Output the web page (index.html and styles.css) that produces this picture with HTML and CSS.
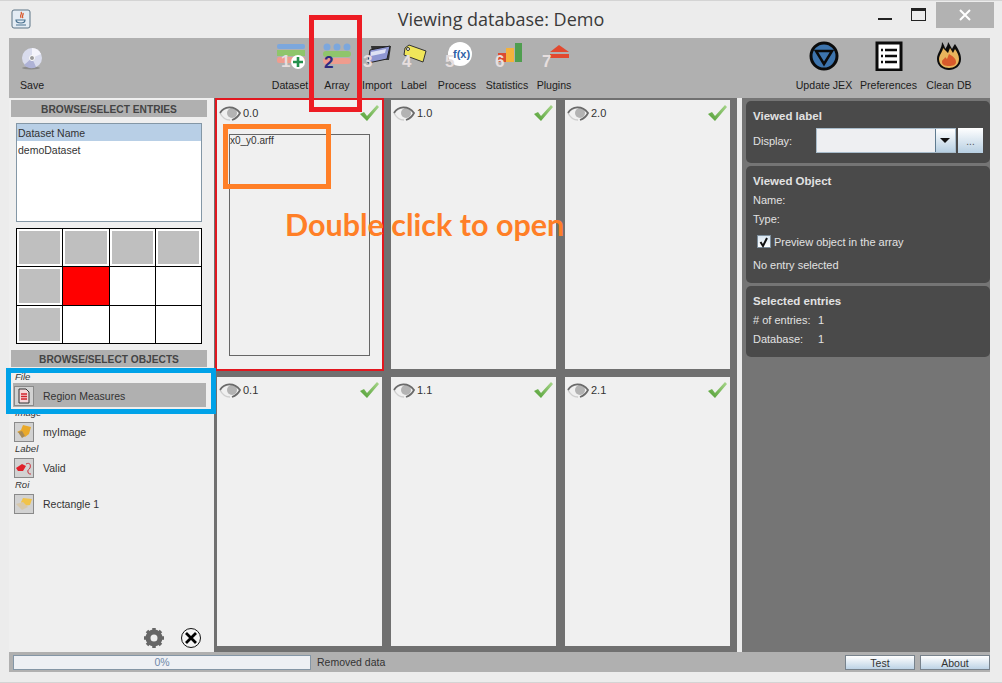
FILE: index.html
```html
<!DOCTYPE html>
<html>
<head>
<meta charset="UTF-8">
<title>Viewing database: Demo</title>
<link rel="stylesheet" href="styles.css">
</head>
<body>
<div class="window">

	<!-- title bar -->
	<div class="titlebar">
		<svg class="app-icon" width="20" height="20" viewBox="0 0 20 20">
			<rect x="1" y="1" width="18" height="18" rx="2" fill="#e4ecf4" stroke="#5d7486"/>
			<path d="M10 3c2 2-2 3 0 6M12 4c1 2-2 3 0 5" stroke="#d8562a" stroke-width="1.3" fill="none"/>
			<path d="M5 11h9c0 3-2 3-4 3s-5 0-5-3zM5 16h10" stroke="#4a7290" stroke-width="1.2" fill="none"/>
		</svg>
		<div class="title">Viewing database: Demo</div>
		<div class="win-controls">
			<div class="win-min"></div>
			<div class="win-max"></div>
			<div class="win-close">
				<svg width="12" height="12" viewBox="0 0 12 12"><path d="M1 1l10 10M11 1L1 11" stroke="#fff" stroke-width="2"/></svg>
			</div>
		</div>
	</div>

	<div class="content">
		<!-- toolbar -->
		<div class="toolbar">
			<div class="tool tool-save">
				<svg width="26" height="30" viewBox="0 0 26 30">
					<ellipse cx="11" cy="27" rx="9" ry="1.500" fill="#8b8b8b"/>
					<circle cx="12" cy="17" r="10" fill="#d9dced"/>
					<path d="M12 7a10 10 0 0 1 9 6l-9 4z" fill="#f4f4fb"/>
					<path d="M4 24a10 10 0 0 0 12 2l-4-9z" fill="#aeb2d6"/>
					<circle cx="12" cy="17" r="2.500" fill="#9a9a9a" stroke="#fff"/>
				</svg>
				<span>Save</span>
			</div>

			<div class="tool-group">
				<div class="tool tool-dataset">
					<svg width="36" height="30" viewBox="0 0 36 30">
						<rect x="5" y="3" width="28" height="5" rx="2" fill="#7ca7dd"/>
						<rect x="5" y="9" width="28" height="6" fill="#8fc56b"/>
						<rect x="5" y="16" width="28" height="6" rx="2" fill="#ef9c8e"/>
						<text x="9" y="26" class="step">1</text>
						<circle cx="26" cy="21" r="7" fill="#fff"/>
						<path d="M26 16v10M21 21h10" stroke="#23904c" stroke-width="2.600"/>
					</svg>
					<span>Dataset</span>
				</div>
				<div class="tool tool-array">
					<svg width="32" height="30" viewBox="0 0 32 30">
						<g fill="#7ca7dd"><circle cx="6" cy="6" r="3.500"/><circle cx="16" cy="6" r="3.500"/><circle cx="26" cy="6" r="3.500"/></g>
						<rect x="2" y="10" width="28" height="6" rx="3" fill="#8fc56b"/>
						<rect x="2" y="17" width="28" height="6" rx="3" fill="#ef9c8e"/>
						<text x="3" y="27" class="step step-dark">2</text>
					</svg>
					<span>Array</span>
				</div>
				<div class="tool tool-import">
					<svg width="32" height="30" viewBox="0 0 32 30">
						<path d="M10 5h20l-2 14H12z" fill="#333"/>
						<path d="M9 9l20-4-3 13-19 4z" fill="#8f97d2" stroke="#222"/>
						<path d="M10 11l15-3-1 4-14 3z" fill="#dfe2f4"/>
						<text x="2" y="26" class="step">3</text>
					</svg>
					<span>Import</span>
				</div>
				<div class="tool tool-label">
					<svg width="32" height="30" viewBox="0 0 32 30">
						<path d="M7 7l4-3 17 6-3 11L6 14z" fill="#f0e55a" stroke="#333"/>
						<circle cx="10" cy="8" r="1.500" fill="#fff" stroke="#333"/>
						<text x="4" y="26" class="step">4</text>
					</svg>
					<span>Label</span>
				</div>
				<div class="tool tool-process">
					<svg width="36" height="30" viewBox="0 0 36 30">
						<circle cx="21" cy="13" r="12" fill="#fff"/>
						<text x="14" y="17" class="fx">f(x)</text>
						<text x="6" y="26" class="step">5</text>
					</svg>
					<span>Process</span>
				</div>
				<div class="tool tool-stats">
					<svg width="36" height="30" viewBox="0 0 36 30">
						<path d="M9 12h8v9H9z" fill="#dc4b32"/>
						<rect x="17" y="7" width="8" height="14" fill="#f5b23c"/>
						<rect x="26" y="2" width="7" height="19" fill="#4f9e4f"/>
						<text x="6" y="26" class="step">6</text>
					</svg>
					<span>Statistics</span>
				</div>
				<div class="tool tool-plugins">
					<svg width="36" height="30" viewBox="0 0 36 30">
						<path d="M14 11L23 4l10 7z" fill="#e2492f"/>
						<rect x="14" y="13" width="19" height="4" fill="#e2492f"/>
						<text x="6" y="26" class="step">7</text>
					</svg>
					<span>Plugins</span>
				</div>
			</div>

			<div class="tool-group tool-group-right">
				<div class="tool tool-update">
					<svg width="30" height="30" viewBox="0 0 30 30">
						<circle cx="15" cy="15" r="13" fill="#3d74ad" stroke="#0b0b0b" stroke-width="3"/>
						<path d="M7 10h16l-8 13z" fill="#3d74ad" stroke="#0b0b0b" stroke-width="2.500"/>
					</svg>
					<span>Update JEX</span>
				</div>
				<div class="tool tool-prefs">
					<svg width="30" height="30" viewBox="0 0 30 30">
						<rect x="3" y="2" width="24" height="27" fill="#fff" stroke="#0b0b0b" stroke-width="3"/>
						<path d="M11 9h12M11 15h12M11 21h12M7 9h2M7 15h2M7 21h2" stroke="#0b0b0b" stroke-width="2.500"/>
					</svg>
					<span>Preferences</span>
				</div>
				<div class="tool tool-clean">
					<svg width="30" height="30" viewBox="0 0 30 30">
						<path d="M8 1c2 3 3 5 3 7 2-2 3-5 3-7 2 3 3 5 4 7 1-2 2-4 3-5 3 5 6 9 6 15 0 7-6 11-12 11S3 25 3 18C3 12 8 8 8 1z" fill="#0d0d0d"/>
						<path d="M9 7c0 3-4 7-4 11 0 6 5 9 10 9s10-3 10-9c0-4-2-7-4-10l-2 4-3-5-2 5z" fill="#e8b45c"/>
						<path d="M15 13c3 2 7 4 7 8 0 3-3 4-7 4s-7-1-7-4c0-3 3-3 3-5l2 2z" fill="#d85a2c"/>
					</svg>
					<span>Clean DB</span>
				</div>
			</div>
		</div>

		<div class="main">
			<!-- left column -->
			<div class="left">
				<div class="section-head">BROWSE/SELECT ENTRIES</div>
				<div class="entry-list">
					<div class="entry selected">Dataset Name</div>
					<div class="entry">demoDataset</div>
				</div>
				<div class="plate">
					<div class="well on"></div><div class="well on"></div><div class="well on"></div><div class="well on"></div>
					<div class="well on"></div><div class="well red"></div><div class="well"></div><div class="well"></div>
					<div class="well on"></div><div class="well"></div><div class="well"></div><div class="well"></div>
				</div>
				<div class="section-head">BROWSE/SELECT OBJECTS</div>
				<div class="objects">
					<div class="obj-type">File</div>
					<div class="obj selected">
						<div class="obj-icon">
							<svg width="14" height="16" viewBox="0 0 14 16"><path d="M2 1h7l3 3v11H2z" fill="#f4d7da" stroke="#333"/><path d="M4 6h6M4 8.500h6M4 11h6" stroke="#d2222c" stroke-width="1.300"/></svg>
						</div>
						<span>Region Measures</span>
					</div>
					<div class="obj-type">Image</div>
					<div class="obj">
						<div class="obj-icon">
							<svg width="18" height="18" viewBox="0 0 18 18"><path d="M8 2l8 2-2 7-4 3-3-3-5-2 4-2z" fill="#e9a92a"/><path d="M3 9l4-1 3 5-3 2z" fill="#a88a55"/></svg>
						</div>
						<span>myImage</span>
					</div>
					<div class="obj-type">Label</div>
					<div class="obj">
						<div class="obj-icon">
							<svg width="18" height="18" viewBox="0 0 18 18"><path d="M1 9l6-4 4 2-3 5-5 0z" fill="#e0202a"/><path d="M11 5c4-2 5 1 4 4-1 2-3 2-2 4 0 2 2 2 3 2" stroke="#c8303a" fill="none"/></svg>
						</div>
						<span>Valid</span>
					</div>
					<div class="obj-type">Roi</div>
					<div class="obj">
						<div class="obj-icon">
							<svg width="18" height="18" viewBox="0 0 18 18"><path d="M8 3l9 1-2 6-7 1-2-4z" fill="#f1c34a"/><path d="M1 9l7-2 5 5-6 3z" fill="#d8c8aa"/></svg>
						</div>
						<span>Rectangle 1</span>
					</div>
				</div>
				<div class="left-tools">
					<svg width="22" height="22" viewBox="0 0 22 22">
						<circle cx="11" cy="11" r="6" fill="none" stroke="#666" stroke-width="5"/>
						<path d="M11 1v4M11 17v4M1 11h4M17 11h4M4 4l3 3M15 15l3 3M18 4l-3 3M7 15l-3 3" stroke="#666" stroke-width="3.500"/>
					</svg>
					<svg width="22" height="22" viewBox="0 0 22 22">
						<circle cx="11" cy="11" r="9.500" fill="#f4f4f4" stroke="#111"/>
						<path d="M6 6l10 10M16 6L6 16" stroke="#000" stroke-width="2.800"/>
					</svg>
				</div>
			</div>

			<!-- array of entries -->
			<div class="array">
				<div class="cell active">
					<div class="cell-head">
						<svg class="eye" width="22" height="16" viewBox="0 0 22 16"><use href="#eye-shape"/></svg>
						<span>0.0</span>
						<svg class="check" width="20" height="16" viewBox="0 0 20 16"><use href="#check-shape"/></svg>
					</div>
					<div class="preview">x0_y0.arff</div>
				</div>
				<div class="cell">
					<div class="cell-head">
						<svg class="eye" width="22" height="16" viewBox="0 0 22 16"><use href="#eye-shape"/></svg>
						<span>1.0</span>
						<svg class="check" width="20" height="16" viewBox="0 0 20 16"><use href="#check-shape"/></svg>
					</div>
				</div>
				<div class="cell">
					<div class="cell-head">
						<svg class="eye" width="22" height="16" viewBox="0 0 22 16"><use href="#eye-shape"/></svg>
						<span>2.0</span>
						<svg class="check" width="20" height="16" viewBox="0 0 20 16"><use href="#check-shape"/></svg>
					</div>
				</div>
				<div class="cell">
					<div class="cell-head">
						<svg class="eye" width="22" height="16" viewBox="0 0 22 16"><use href="#eye-shape"/></svg>
						<span>0.1</span>
						<svg class="check" width="20" height="16" viewBox="0 0 20 16"><use href="#check-shape"/></svg>
					</div>
				</div>
				<div class="cell">
					<div class="cell-head">
						<svg class="eye" width="22" height="16" viewBox="0 0 22 16"><use href="#eye-shape"/></svg>
						<span>1.1</span>
						<svg class="check" width="20" height="16" viewBox="0 0 20 16"><use href="#check-shape"/></svg>
					</div>
				</div>
				<div class="cell">
					<div class="cell-head">
						<svg class="eye" width="22" height="16" viewBox="0 0 22 16"><use href="#eye-shape"/></svg>
						<span>2.1</span>
						<svg class="check" width="20" height="16" viewBox="0 0 20 16"><use href="#check-shape"/></svg>
					</div>
				</div>
			</div>

			<div class="stripe"></div>

			<!-- right column -->
			<div class="right">
				<div class="panel panel-label">
					<div class="panel-title">Viewed label</div>
					<div class="display-row">
						<span class="display-name">Display:</span>
						<div class="combo"><div class="combo-arrow"></div></div>
						<div class="dots">...</div>
					</div>
				</div>
				<div class="panel panel-object">
					<div class="panel-title">Viewed Object</div>
					<div class="panel-line">Name:</div>
					<div class="panel-line">Type:</div>
					<div class="check-row">
						<div class="checkbox">
							<svg width="12" height="12" viewBox="0 0 12 12"><path d="M2.500 6l2.500 4 4-8" stroke="#111" stroke-width="2" fill="none"/></svg>
						</div>
						<span>Preview object in the array</span>
					</div>
					<div class="panel-line">No entry selected</div>
				</div>
				<div class="panel panel-selected">
					<div class="panel-title">Selected entries</div>
					<div class="panel-line count"><span># of entries:</span><span>1</span></div>
					<div class="panel-line count"><span>Database:</span><span>1</span></div>
				</div>
			</div>
		</div>

		<!-- status bar -->
		<div class="statusbar">
			<div class="progress">0%</div>
			<div class="status-text">Removed data</div>
			<div class="btn btn-test">Test</div>
			<div class="btn">About</div>
		</div>
	</div>

	<div class="note-box note-red"></div>
	<div class="note-box note-orange"></div>
	<div class="note-box note-blue"></div>
	<div class="note-text">Double click to open</div>
</div>

<svg width="0" height="0" class="defs">
	<defs>
		<linearGradient id="check-fill" x1="0" y1="1" x2="1" y2="0">
			<stop offset="0" stop-color="#4f9e32"/>
			<stop offset="1" stop-color="#a9d68c"/>
		</linearGradient>
		<g id="eye-shape">
			<path d="M1 8C3 12 7 15 11 15" stroke="#cfcfcf" stroke-width="1.500" fill="none"/>
			<circle cx="13" cy="8" r="5" fill="#b3b3b3"/>
			<path d="M1 8C5 1 15 0 21 8C19 12 16 14 13 15" stroke="#6a6a6a" stroke-width="1.800" fill="none"/>
		</g>
		<g id="check-shape">
			<path d="M1 9l4-2 3 4L18 0l2 2L8 16z" fill="url(#check-fill)"/>
		</g>
	</defs>
</svg>
</body>
</html>
```

FILE: styles.css
```css
* {
	padding: 0;
	margin: 0;
	box-sizing: border-box;
}

body {
	font-family: "Liberation Sans", Arial, sans-serif;
	font-size: 11px;
	background-color: #ececec;
	overflow: hidden;
}

.window {
	position: relative;
	width: 1002px;
	height: 683px;
	background-color: #ececec;
	border-top: 1px solid #d4d4d4;
	border-bottom: 1px solid #d4d4d4;
	overflow: hidden;
}

.defs {
	position: absolute;
}

/* title bar */
.titlebar {
	height: 37px;
	display: flex;
	align-items: flex-start;
	padding-left: 11px;
	position: relative;
}

.app-icon {
	margin-top: 8px;
}

.title {
	flex: 1;
	text-align: center;
	font-family: "Open Sans", sans-serif;
	font-size: 18px;
	line-height: 36px;
	color: #3a3a3a;
	padding-left: 93px;
}

.win-controls {
	display: flex;
	align-items: flex-start;
	width: 124px;
}

.win-min {
	width: 14px;
	height: 2px;
	background-color: #222;
	margin-top: 17px;
}

.win-max {
	width: 15px;
	height: 13px;
	border: 1px solid #222;
	border-top-width: 3px;
	margin: 7px 0 0 19px;
}

.win-close {
	width: 58px;
	height: 26px;
	margin: 1px 0 0 10px;
	background-color: #b2b2b2;
	display: flex;
	align-items: center;
	justify-content: center;
}

.content {
	margin: 0 12px 0 9px;
	display: flex;
	flex-direction: column;
}

/* toolbar */
.toolbar {
	height: 60px;
	background-color: #b0b0b0;
	display: flex;
	padding-left: 11px;
}

.tool {
	display: flex;
	flex-direction: column;
	align-items: center;
	padding-top: 3px;
	color: #1c1c1c;
	font-size: 10.600px;
}

.tool svg {
	display: block;
	height: 30px;
	margin-bottom: 7px;
}

.tool span {
	line-height: 14px;
	white-space: nowrap;
}

.tool-save {
	align-items: flex-start;
}

.tool-group {
	display: flex;
	margin-left: 218px;
}

.tool-dataset { width: 52px; }
.tool-array { width: 42px; }
.tool-import { width: 38px; }
.tool-label { width: 36px; }
.tool-process { width: 50px; }
.tool-stats { width: 50px; }
.tool-plugins { width: 44px; }
.tool-update { width: 64px; }
.tool-prefs { width: 65px; }
.tool-clean { width: 56px; }

.tool-group-right {
	margin-left: auto;
	padding-right: 13px;
}

.step {
	font-family: "Liberation Sans", sans-serif;
	font-size: 17px;
	font-weight: bold;
	fill: #e6dede;
}

.step-dark {
	fill: #2d2a80;
}

.fx {
	font-family: "Liberation Sans", sans-serif;
	font-size: 11px;
	font-weight: bold;
	fill: #2f62a8;
}

/* main row */
.main {
	height: 554px;
	display: flex;
}

.left {
	width: 205px;
	background-color: #efefef;
	padding: 2px 7px 0 2px;
	display: flex;
	flex-direction: column;
	position: relative;
	font-size: 10.500px;
}

.section-head {
	height: 17px;
	padding-top: 2px;
	background-color: #b0b0b0;
	color: #444;
	font-size: 10.200px;
	font-weight: bold;
	line-height: 15px;
	text-align: center;
}

.entry-list {
	height: 99px;
	margin: 6px 5px 0 5px;
	background-color: #fff;
	border: 1px solid #8497a6;
}

.entry {
	height: 17px;
	line-height: 18px;
	padding-left: 1px;
	color: #333;
}

.entry.selected {
	background-color: #b8cfe6;
}

.plate {
	height: 116px;
	margin: 6px 5px 6px 5px;
	display: grid;
	grid-template-columns: repeat(4, 1fr);
	grid-template-rows: repeat(3, 1fr);
	border: 1px solid #000;
	background-color: #000;
	gap: 1px;
}

.well {
	background-color: #fff;
}

.well.on {
	background-color: #bfbfbf;
	border: 2px solid #fff;
}

.well.red {
	background-color: #f00;
}

.objects {
	padding: 4px 1px 0 2px;
}

.obj-type {
	height: 12px;
	line-height: 12px;
	font-size: 9.500px;
	font-style: italic;
	color: #333;
	padding-left: 2px;
}

.obj {
	height: 24px;
	display: flex;
	align-items: center;
	gap: 9px;
	color: #333;
	line-height: 14px;
	padding-top: 1px;
}

.obj.selected {
	background-color: #b0b0b0;
}

.obj-icon {
	width: 20px;
	height: 20px;
	margin-left: 1px;
	background-color: #d2d2d2;
	border: 1px solid #8a8a8a;
	display: flex;
	align-items: center;
	justify-content: center;
}

.left-tools {
	margin-top: auto;
	padding: 0 5px 3px 0;
	display: flex;
	justify-content: flex-end;
	gap: 15px;
}

/* array */
.array {
	width: 523px;
	background-color: #707070;
	padding: 2px 7px 0 3px;
	display: grid;
	grid-template-columns: repeat(3, 165px);
	grid-template-rows: 269px 269px;
	column-gap: 9px;
	row-gap: 8px;
}

.cell {
	background-color: #f0f0f0;
	padding: 5px 3px 0 2px;
	color: #333;
}

.cell.active {
	outline: 2px solid #e2171f;
	padding-bottom: 13px;
	display: flex;
	flex-direction: column;
}

.cell-head {
	display: flex;
	align-items: center;
	gap: 2px;
}

.check {
	margin-left: auto;
}

.preview {
	flex: 1;
	margin: 13px 9px 0 10px;
	border: 1px solid #666;
	font-size: 10px;
	line-height: 12px;
}

.stripe {
	width: 5px;
	background-color: #ececec;
}

/* right column */
.right {
	width: 248px;
	background-color: #757575;
	padding: 3px 0 0 4px;
	display: flex;
	flex-direction: column;
	gap: 3px;
}

.panel {
	background-color: #4a4a4a;
	border-radius: 5px;
	color: #e2e2e2;
	padding: 8px 7px 0 7px;
}

.panel-label {
	height: 62px;
}

.panel-object {
	height: 117px;
}

.panel-selected {
	height: 71px;
}

.panel-title {
	font-size: 11.500px;
	font-weight: bold;
	line-height: 14px;
	margin-bottom: 5px;
}

.panel-line {
	line-height: 14px;
	margin-bottom: 5px;
}

.display-row {
	display: flex;
	align-items: center;
}

.display-name {
	width: 63px;
}

.combo {
	width: 140px;
	height: 25px;
	background-color: #eeeff2;
	border: 1px solid #a8bccb;
	display: flex;
	justify-content: flex-end;
}

.combo-arrow {
	width: 20px;
	background: linear-gradient(#fff, #b7cfe2);
	position: relative;
	border-left: 1px solid #5f7b90;
}

.combo-arrow::after {
	content: "";
	position: absolute;
	left: 4px;
	top: 9px;
	border-left: 5px solid transparent;
	border-right: 5px solid transparent;
	border-top: 5px solid #111;
}

.dots {
	width: 25px;
	height: 25px;
	margin-left: 2px;
	background: linear-gradient(#fff, #b7cfe2);
	color: #555;
	text-align: center;
	line-height: 27px;
	font-size: 10px;
}

.check-row {
	display: flex;
	align-items: center;
	gap: 3px;
	margin: 9px 0 10px 4px;
}

.checkbox {
	width: 14px;
	height: 13px;
	background: linear-gradient(#d9e6f1, #fff);
	border: 1px solid #7d8e9c;
	display: flex;
}

.count {
	display: flex;
}

.count span:first-child {
	width: 65px;
}

/* status bar */
.statusbar {
	height: 20px;
	background-color: #b0b0b0;
	display: flex;
	align-items: center;
	padding-left: 4px;
	font-size: 10.500px;
}

.progress {
	width: 298px;
	height: 15px;
	background-color: #eef0f4;
	border: 1px solid #8496a6;
	color: #6f88a8;
	line-height: 13px;
	text-align: center;
}

.status-text {
	margin-left: 6px;
	color: #333;
	flex: 1;
}

.btn {
	width: 70px;
	height: 15px;
	background: linear-gradient(#fff, #bdd3e6);
	border: 1px solid #77828c;
	color: #333;
	line-height: 14px;
	text-align: center;
}

.btn-test {
	margin-right: 5px;
}

/* annotations drawn over the screenshot */
.note-box {
	position: absolute;
	border-style: solid;
	border-width: 5px;
	pointer-events: none;
}

.note-red {
	left: 309px;
	top: 14px;
	width: 53px;
	height: 97px;
	border-color: #ed1c24;
}

.note-orange {
	left: 223px;
	top: 123px;
	width: 108px;
	height: 65px;
	border-color: #ff7f27;
}

.note-blue {
	left: 6px;
	top: 367px;
	width: 210px;
	height: 46px;
	border-color: #00a2e8;
}

.note-text {
	position: absolute;
	left: 285px;
	top: 205px;
	font-family: Lato, sans-serif;
	font-weight: bold;
	font-size: 30.500px;
	line-height: 36px;
	color: #ff7f27;
	white-space: nowrap;
}
```
